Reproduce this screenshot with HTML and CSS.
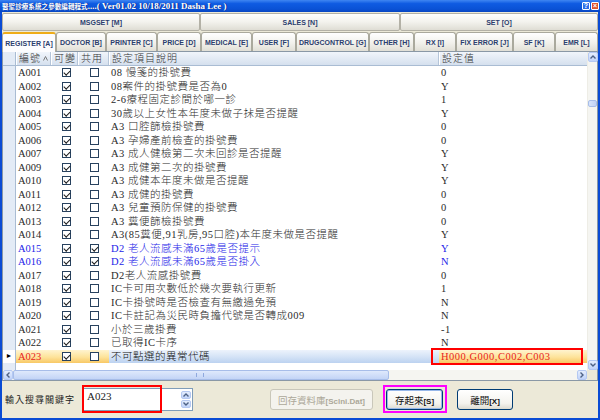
FILE: index.html
```html
<!DOCTYPE html>
<html lang="zh-Hant">
<head>
    <meta charset="UTF-8">
    <meta name="viewport" content="width=device-width, initial-scale=1.0">
    <title>醫聖診療系統之參數編輯程式</title>
    <link rel="stylesheet" href="styles.css">
</head>
<body>
<div class="window">
    <div class="titlebar">
        <span class="title"><span class="title-cjk">醫聖診療系統之參數編輯程式</span>....( Ver01.02 10/18/2011 Dasha Lee )</span>
        <span class="tb-btns"><span class="tb-help">?</span><span class="tb-close">×</span></span>
    </div>
    <div class="frame">
        <div class="groups">
            <div class="group g-left">MSGSET [M]</div>
            <div class="group g-mid">SALES [N]</div>
            <div class="group g-right">SET [O]</div>
        </div>
        <div class="tabs">
            <div class="tab active t-register">REGISTER [A]</div>
            <div class="tab t-doctor">DOCTOR [B]</div>
            <div class="tab t-printer">PRINTER [C]</div>
            <div class="tab t-price">PRICE [D]</div>
            <div class="tab t-medical">MEDICAL [E]</div>
            <div class="tab t-user">USER [F]</div>
            <div class="tab t-drug">DRUGCONTROL [G]</div>
            <div class="tab t-other">OTHER [H]</div>
            <div class="tab t-rx">RX [I]</div>
            <div class="tab t-fix">FIX ERROR [J]</div>
            <div class="tab t-sf">SF [K]</div>
            <div class="tab t-emr">EMR [L]</div>
        </div>
        <div class="grid">
            <div class="grid-main">
                <div class="rows">
                    <div class="row head">
                        <span class="rh"></span>
                        <span class="h-cell">編號<svg width="5" height="5" viewBox="0 0 5 5"><path d="M0.5 4.5 L2.5 0.5 L4.5 4.5" fill="none" stroke="#7a7a7a"/></svg></span>
                        <span class="h-cell">可變</span>
                        <span class="h-cell">共用</span>
                        <span class="h-cell">設定項目說明</span>
                        <span class="h-cell last">設定值</span>
                    </div>
                    <div class="row"><span class="rh"></span><span class="c-code">A001</span><span class="c-cb"><i class="cb on"></i></span><span class="c-cb2"><i class="cb"></i></span><span class="c-desc">08 慢箋的掛號費</span><span class="c-val">0</span></div>
                    <div class="row"><span class="rh"></span><span class="c-code">A002</span><span class="c-cb"><i class="cb on"></i></span><span class="c-cb2"><i class="cb"></i></span><span class="c-desc">08案件的掛號費是否為0</span><span class="c-val">Y</span></div>
                    <div class="row"><span class="rh"></span><span class="c-code">A003</span><span class="c-cb"><i class="cb on"></i></span><span class="c-cb2"><i class="cb"></i></span><span class="c-desc">2-6療程固定診間於哪一診</span><span class="c-val">1</span></div>
                    <div class="row"><span class="rh"></span><span class="c-code">A004</span><span class="c-cb"><i class="cb on"></i></span><span class="c-cb2"><i class="cb"></i></span><span class="c-desc">30歲以上女性本年度未做子抹是否提醒</span><span class="c-val">Y</span></div>
                    <div class="row"><span class="rh"></span><span class="c-code">A005</span><span class="c-cb"><i class="cb on"></i></span><span class="c-cb2"><i class="cb"></i></span><span class="c-desc">A3 口腔篩檢掛號費</span><span class="c-val">0</span></div>
                    <div class="row"><span class="rh"></span><span class="c-code">A006</span><span class="c-cb"><i class="cb on"></i></span><span class="c-cb2"><i class="cb"></i></span><span class="c-desc">A3 孕婦產前檢查的掛號費</span><span class="c-val">0</span></div>
                    <div class="row"><span class="rh"></span><span class="c-code">A007</span><span class="c-cb"><i class="cb on"></i></span><span class="c-cb2"><i class="cb"></i></span><span class="c-desc">A3 成人健檢第二次未回診是否提醒</span><span class="c-val">Y</span></div>
                    <div class="row"><span class="rh"></span><span class="c-code">A009</span><span class="c-cb"><i class="cb on"></i></span><span class="c-cb2"><i class="cb"></i></span><span class="c-desc">A3 成健第二次的掛號費</span><span class="c-val">Y</span></div>
                    <div class="row"><span class="rh"></span><span class="c-code">A010</span><span class="c-cb"><i class="cb on"></i></span><span class="c-cb2"><i class="cb"></i></span><span class="c-desc">A3 成健本年度未做是否提醒</span><span class="c-val">Y</span></div>
                    <div class="row"><span class="rh"></span><span class="c-code">A011</span><span class="c-cb"><i class="cb on"></i></span><span class="c-cb2"><i class="cb"></i></span><span class="c-desc">A3 成健的掛號費</span><span class="c-val">0</span></div>
                    <div class="row"><span class="rh"></span><span class="c-code">A012</span><span class="c-cb"><i class="cb on"></i></span><span class="c-cb2"><i class="cb"></i></span><span class="c-desc">A3 兒童預防保健的掛號費</span><span class="c-val">0</span></div>
                    <div class="row"><span class="rh"></span><span class="c-code">A013</span><span class="c-cb"><i class="cb on"></i></span><span class="c-cb2"><i class="cb"></i></span><span class="c-desc">A3 糞便篩檢掛號費</span><span class="c-val">0</span></div>
                    <div class="row"><span class="rh"></span><span class="c-code">A014</span><span class="c-cb"><i class="cb on"></i></span><span class="c-cb2"><i class="cb"></i></span><span class="c-desc">A3(85糞便,91乳房,95口腔)本年度未做是否提醒</span><span class="c-val">Y</span></div>
                    <div class="row blue"><span class="rh"></span><span class="c-code">A015</span><span class="c-cb"><i class="cb on"></i></span><span class="c-cb2"><i class="cb on"></i></span><span class="c-desc">D2 老人流感未滿65歲是否提示</span><span class="c-val">Y</span></div>
                    <div class="row blue"><span class="rh"></span><span class="c-code">A016</span><span class="c-cb"><i class="cb on"></i></span><span class="c-cb2"><i class="cb on"></i></span><span class="c-desc">D2 老人流感未滿65歲是否掛入</span><span class="c-val">N</span></div>
                    <div class="row"><span class="rh"></span><span class="c-code">A017</span><span class="c-cb"><i class="cb on"></i></span><span class="c-cb2"><i class="cb"></i></span><span class="c-desc">D2老人流感掛號費</span><span class="c-val">0</span></div>
                    <div class="row"><span class="rh"></span><span class="c-code">A018</span><span class="c-cb"><i class="cb on"></i></span><span class="c-cb2"><i class="cb"></i></span><span class="c-desc">IC卡可用次數低於幾次要執行更新</span><span class="c-val">1</span></div>
                    <div class="row"><span class="rh"></span><span class="c-code">A019</span><span class="c-cb"><i class="cb on"></i></span><span class="c-cb2"><i class="cb"></i></span><span class="c-desc">IC卡掛號時是否檢查有無繳過免預</span><span class="c-val">N</span></div>
                    <div class="row"><span class="rh"></span><span class="c-code">A020</span><span class="c-cb"><i class="cb on"></i></span><span class="c-cb2"><i class="cb"></i></span><span class="c-desc">IC卡註記為災民時負擔代號是否轉成009</span><span class="c-val">N</span></div>
                    <div class="row"><span class="rh"></span><span class="c-code">A021</span><span class="c-cb"><i class="cb on"></i></span><span class="c-cb2"><i class="cb"></i></span><span class="c-desc">小於三歲掛費</span><span class="c-val">-1</span></div>
                    <div class="row"><span class="rh"></span><span class="c-code">A022</span><span class="c-cb"><i class="cb on"></i></span><span class="c-cb2"><i class="cb"></i></span><span class="c-desc">已取得IC卡序</span><span class="c-val">N</span></div>
                    <div class="row sel"><span class="rh">&#9658;</span><span class="c-code">A023</span><span class="c-cb"><i class="cb on"></i></span><span class="c-cb2"><i class="cb"></i></span><span class="c-desc">不可點選的異常代碼</span><span class="c-val">H000,G000,C002,C003</span></div>
                </div>
                <div class="vscroll">
                    <span class="sb-btn"><svg width="6" height="4" viewBox="0 0 6 4"><path d="M0.5 3.5 L3 1 L5.5 3.5" fill="none" stroke="#4d6185" stroke-width="1.4"/></svg></span>
                    <span class="sb-track"><span class="vthumb"></span></span>
                    <span class="sb-btn"><svg width="6" height="4" viewBox="0 0 6 4"><path d="M0.5 0.5 L3 3 L5.5 0.5" fill="none" stroke="#4d6185" stroke-width="1.4"/></svg></span>
                </div>
            </div>
            <div class="hscroll-row">
                <div class="hscroll">
                    <span class="sb-btn"><svg width="4" height="6" viewBox="0 0 4 6"><path d="M3.5 0.5 L1 3 L3.5 5.5" fill="none" stroke="#4d6185" stroke-width="1.4"/></svg></span>
                    <span class="sb-track h"><span class="hthumb"></span></span>
                    <span class="sb-btn"><svg width="4" height="6" viewBox="0 0 4 6"><path d="M0.5 0.5 L3 3 L0.5 5.5" fill="none" stroke="#4d6185" stroke-width="1.4"/></svg></span>
                </div>
                <div class="corner"></div>
            </div>
        </div>
        <div class="footer">
            <span class="search-label">輸入搜尋關鍵字</span>
            <div class="search">
                <span class="search-text">A023</span>
                <span class="spin">
                    <span class="spin-btn"><svg width="6" height="4" viewBox="0 0 6 4"><path d="M0.5 3.5 L3 1 L5.5 3.5" fill="none" stroke="#4d6185" stroke-width="1.4"/></svg></span>
                    <span class="spin-btn"><svg width="6" height="4" viewBox="0 0 6 4"><path d="M0.5 0.5 L3 3 L5.5 0.5" fill="none" stroke="#4d6185" stroke-width="1.4"/></svg></span>
                </span>
            </div>
            <button class="btn btn-db" disabled>回存資料庫<b>[Sclni.Dat]</b></button>
            <button class="btn btn-save">存起來<b>[S]</b></button>
            <button class="btn btn-exit">離開<b>[X]</b></button>
        </div>
    </div>
    <div class="mark mark-value"></div>
    <div class="mark mark-search"></div>
    <div class="mark mark-save"></div>
</div>
</body>
</html>
```

FILE: styles.css
```css
* { box-sizing: border-box; }
body { margin: 0; width: 600px; height: 420px; overflow: hidden; background: #ece9d8; font-family: "Liberation Serif", "Noto Sans CJK TC", serif; }
.window { position: relative; width: 600px; height: 420px; display: flex; flex-direction: column; }

/* title bar */
.titlebar { height: 12px; display: flex; align-items: center; justify-content: space-between; padding: 0 1px 0 2px; background: linear-gradient(#3f86f2, #0f5be2 30%, #0a52d6 75%, #0846c2); color: #fff; }
.title { font: bold 9px/12px "Liberation Serif", "Noto Sans CJK TC", serif; white-space: nowrap; text-shadow: 1px 0 0 #0a2c8c; }
.title-cjk { font-size: 6.6px; letter-spacing: 0; }
.tb-btns { display: flex; gap: 1px; }
.tb-help, .tb-close { width: 8px; height: 8px; border: 1px solid #fff; border-radius: 1px; font: bold 7px/6px "Liberation Sans", sans-serif; color: #fff; text-align: center; }
.tb-help { background: #2f6fe8; }
.tb-close { background: #e0542c; }

/* frame */
.frame { flex: 1; display: flex; flex-direction: column; border: 2px solid #0a4bd4; border-top: 0; }
.groups { display: flex; height: 18px; margin-top: 1px; }
.group { display: flex; align-items: center; justify-content: center; border: 1px solid #b3b1a6; border-radius: 2px; background: linear-gradient(#fefefd, #f3f2ed 50%, #dfddd4); font: bold 7px "Liberation Sans", sans-serif; color: #2c3e6e; }
.g-left { width: 198px; }
.g-mid { width: 200px; }
.g-right { width: 198px; }

.tabs { display: flex; height: 19px; margin-top: 1px; }
.tab { display: flex; align-items: center; justify-content: center; border: 1px solid #aaa99d; border-bottom: 0; border-radius: 3px 3px 0 0; background: linear-gradient(#ffffff, #f2f1ec 55%, #e1dfd6); font: bold 7px "Liberation Sans", sans-serif; color: #2c3e6e; white-space: nowrap; }
.tab.active { background: #fcfcfe; border-top: 2px solid #eeac18; height: 20px; position: relative; z-index: 1; }
.t-register { width: 54px; }
.t-doctor { width: 50px; }
.t-printer { width: 51px; }
.t-price { width: 44px; }
.t-medical { width: 51px; }
.t-user { width: 44px; }
.t-drug { width: 73px; }
.t-other { width: 45px; }
.t-rx { width: 42px; }
.t-fix { width: 57px; }
.t-sf { width: 42px; }
.t-emr { width: 43px; }

/* data grid */
.grid { height: 330px; display: flex; flex-direction: column; border: 1px solid #8a98a6; background: #fff; }
.grid-main { height: 318px; display: flex; }
.rows { width: 584px; overflow: hidden; background: linear-gradient(to right, #e3ebf6 12px, #a9bcd3 12px 13px, #fff 13px); }
.row { display: grid; grid-template-columns: 13px 35px 27px 31px 330px 148px; height: 13.5px; line-height: 13.5px; font-size: 10.5px; font-weight: 300; color: #2a2a2a; white-space: nowrap; }
.row > span { overflow: hidden; }
.rh { background: #e3ebf6; border-right: 1px solid #a9bcd3; font-size: 7px; text-align: center; color: #000; }
.row.head { height: 14px; line-height: 13px; background: linear-gradient(#f1f5fb, #d5e0ee); border-bottom: 1px solid #a9bcd3; font-size: 10px; color: #333; }
.h-cell { padding-left: 3px; letter-spacing: 1px; border-right: 1px solid #b5c5d9; box-shadow: inset 1px 0 0 #fff; }
.h-cell svg { margin-left: 2px; vertical-align: 1px; }
.h-cell.last { border-right: 0; }
.c-code { padding-left: 2px; }
.c-cb { display: flex; align-items: center; justify-content: center; padding-left: 4px; }
.c-cb2 { display: flex; align-items: center; justify-content: center; padding-left: 2px; }
.c-desc { padding-left: 2px; letter-spacing: 0.5px; }
.c-val { padding-left: 2px; letter-spacing: 0.5px; }
.cb { width: 9px; height: 9px; border: 1px solid #27415e; background: #fff; position: relative; display: block; }
.cb.on::after { content: ""; position: absolute; left: 2px; top: 0; width: 2.5px; height: 5px; border: solid #1a1a1a; border-width: 0 1.4px 1.4px 0; transform: rotate(45deg); }

.row.blue { color: #2323e8; }
.row.sel .rh { background: #fff; }
.row.sel .c-code, .row.sel .c-cb, .row.sel .c-cb2, .row.sel .c-val { background: linear-gradient(#fff4cf, #fde39a 55%, #f8c865); }
.row.sel .c-code, .row.sel .c-val { color: #e8231d; }
.row.sel .c-desc { background: linear-gradient(#edf3fc, #d3e2f6 55%, #bcd2f0); color: #111; }

/* scrollbars */
.vscroll { width: 10px; display: flex; flex-direction: column; background: #f5f5f1; border-left: 1px solid #eeede6; }
.sb-btn { width: 10px; height: 10px; flex: none; display: flex; align-items: center; justify-content: center; background: linear-gradient(#e4edfd, #c0d3f9); border: 1px solid #b4c8f2; border-radius: 2px; }
.sb-track { flex: 1; display: flex; flex-direction: column; }
.vthumb { margin-top: 38px; height: 7px; border: 1px solid #a7bde9; border-radius: 2px; background: linear-gradient(to right, #d6e3fb, #bfd1f6); }
.hscroll-row { height: 10px; display: flex; }
.hscroll { width: 584px; display: flex; background: #f5f5f1; }
.sb-track.h { flex-direction: row; }
.hthumb { width: 376px; border: 1px solid #a7bde9; border-radius: 2px; background: linear-gradient(#dfe9fc, #c3d4f6); position: relative; }
.hthumb::after { content: ""; position: absolute; left: 182px; top: 2px; width: 6px; height: 4px; border-left: 1px solid #8fa9de; border-right: 1px solid #8fa9de; }
.corner { flex: 1; background: #ece9d8; }

/* footer */
.footer { flex: 1; display: flex; align-items: center; padding-left: 3px; }
.search-label { width: 78px; font: 9px "Noto Sans CJK TC", sans-serif; letter-spacing: 1px; color: #222; }
.search { width: 110px; height: 23px; display: flex; border: 1px solid #7f9db9; background: #fff; }
.search-text { flex: 1; padding: 0 3px; font-size: 11px; line-height: 15px; color: #222; }
.spin { width: 11px; display: flex; flex-direction: column; gap: 1px; padding: 2px 1px 2px 0; }
.spin-btn { flex: 1; display: flex; align-items: center; justify-content: center; background: linear-gradient(#e4edfd, #c0d3f9); border: 1px solid #b4c8f2; border-radius: 2px; }
.btn { height: 21px; padding: 0; border: 1px solid #003c74; border-radius: 3px; background: linear-gradient(#ffffff, #f4f3ee 70%, #dcdad0); font: 9.5px "Noto Sans CJK TC", sans-serif; color: #111; white-space: nowrap; }
.btn b { font: bold 8px "Liberation Sans", sans-serif; }
.btn-db { width: 103px; margin-left: 77px; border-color: #c9c7ba; background: #f4f3ee; color: #aca899; }
.btn-save { width: 57px; margin-left: 13px; box-shadow: inset 0 0 0 1px #98b8ea; }
.btn-exit { width: 56px; margin-left: 14px; }

/* highlight marks drawn over the screenshot */
.mark { position: absolute; border: 2px solid #ff0000; pointer-events: none; }
.mark-value { left: 431px; top: 348px; width: 152px; height: 17px; }
.mark-search { left: 82px; top: 385px; width: 80px; height: 28px; }
.mark-save { left: 383px; top: 385px; width: 64px; height: 28px; border-color: #ff00ff; }
```
